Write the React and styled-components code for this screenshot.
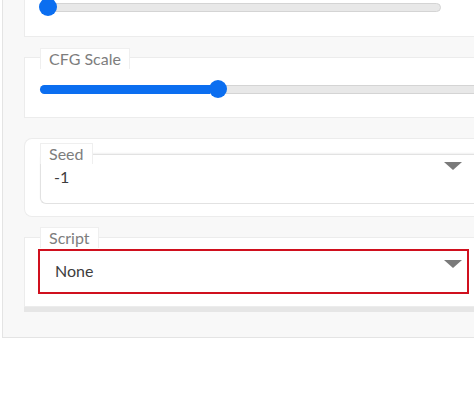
import React from 'react';
import styled, { createGlobalStyle } from 'styled-components';

const Global = createGlobalStyle`
	html, body {
		margin: 0;
		padding: 0;
		background: #ffffff;
		overflow: hidden;
	}
	body {
		font-family: Lato, 'Noto Sans', sans-serif;
	}
`;

const Page = styled.div`
	width: 474px;
	height: 395px;
	overflow: hidden;
`;

const Panel = styled.div`
	width: 560px;
	margin: -20px 0 0 2px;
	background: #f8f8f8;
	border: 1px solid #e4e4e4;
	border-top: none;
	padding: 0 0 30px 21px;
	display: flex;
	flex-direction: column;
	gap: 20px;
`;

const Block = styled.div`
	background: #ffffff;
	border: 1px solid #ececec;
	border-right: none;
	padding: ${(p) => p.pad || '0 15px 18px'};
	border-radius: ${(p) => (p.round ? '8px 0 0 8px' : '0')};
	box-shadow: ${(p) => (p.shadow ? '0 5px 0 #e6e6e6' : 'none')};
	display: flex;
	flex-direction: column;
`;

const Label = styled.div`
	align-self: flex-start;
	background: #ffffff;
	border: 1px solid #efefef;
	border-bottom: none;
	color: #7d7d7d;
	font-size: 16px;
	line-height: 20px;
	padding: 0 8px;
	margin-top: ${(p) => p.lift || '0'};
	margin-left: ${(p) => p.left || '0'};
	position: relative;
	z-index: 1;
`;

const SliderRow = styled.div`
	width: ${(p) => p.width || '560px'};
	height: 20px;
	display: flex;
	align-items: center;
	position: relative;
	margin-top: ${(p) => p.top || '0'};
`;

const Track = styled.div`
	flex: 1;
	height: 9px;
	box-sizing: border-box;
	border-radius: 5px;
	background: #e8e8e8;
	border: 1px solid #d4d4d4;
	position: relative;
	display: flex;
`;

const Fill = styled.div`
	height: 9px;
	margin: -1px 0 0 -1px;
	border-radius: 5px 0 0 5px;
	background: #0b6ef0;
`;

const Thumb = styled.div`
	position: absolute;
	top: 50%;
	width: 18px;
	height: 18px;
	border-radius: 50%;
	background: #0b6ef0;
	transform: translate(-50%, -50%);
`;

const Dropdown = styled.div`
	width: ${(p) => p.width};
	height: ${(p) => p.height};
	box-sizing: border-box;
	background: #ffffff;
	border: ${(p) => (p.active ? '2px solid #d0101e' : '1px solid #e2e2e2')};
	border-radius: ${(p) => (p.active ? '0' : '6px 0 0 6px')};
	border-right: ${(p) => (p.active ? '2px solid #d0101e' : 'none')};
	box-shadow: ${(p) => (p.active ? 'none' : '0 -1px 2px rgba(0,0,0,0.06)')};
	display: flex;
	align-items: ${(p) => (p.active ? 'center' : 'flex-start')};
	padding: ${(p) => p.pad};
	margin-top: ${(p) => p.top || '0'};
	color: #3d3d3d;
	font-size: 16px;
`;

const Value = styled.span`
	flex: 1;
	margin-top: ${(p) => p.top || '0'};
`;

const Arrow = styled.span`
	width: 0;
	height: 0;
	border-left: 9.5px solid transparent;
	border-right: 9.5px solid transparent;
	border-top: 8px solid #7a7a7a;
	margin-top: ${(p) => p.top || '0'};
	margin-right: ${(p) => p.right || '0'};
`;

const Slider = ({ value, width, top }) => (
	<SliderRow width={width} top={top}>
		<Track>
			{value > 0 && <Fill style={{ width: `${value}px` }} />}
		</Track>
		<Thumb style={{ left: `${value + 8}px` }} />
	</SliderRow>
);

const App = () => (
	<Page>
		<Global />
		<Panel>
			<Block pad="16px 15px 19px">
				<Slider value={0} width="401px" />
			</Block>

			<Block>
				<Label lift="-10px">CFG Scale</Label>
				<Slider value={170} top="10px" />
			</Block>

			<Block round pad="4px 0 12px 15px">
				<Label>Seed</Label>
				<Dropdown width="520px" height="50px" pad="6px 0 0 13px" top="-10px">
					<Value top="6px">-1</Value>
					<Arrow top="1px" right="98px" />
				</Dropdown>
			</Block>

			<Block shadow pad="0 0 12px 13px">
				<Label lift="-11px" left="2px">Script</Label>
				<Dropdown active width="431px" height="45px" pad="0 5px 0 15px" top="1px">
					<Value top="-2px">None</Value>
					<Arrow top="-16px" />
				</Dropdown>
			</Block>
		</Panel>
	</Page>
);

export default App;
